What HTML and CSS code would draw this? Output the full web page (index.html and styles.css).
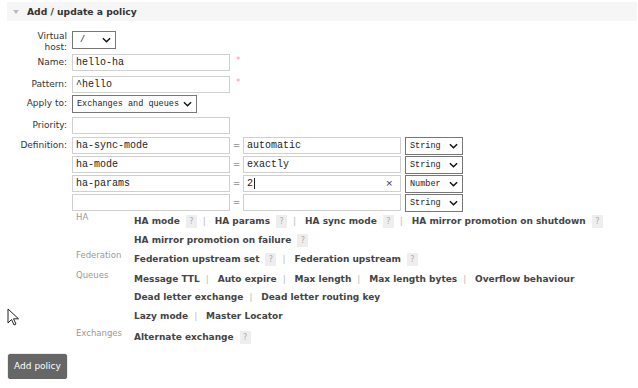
FILE: index.html
```
<!DOCTYPE html>
<html lang="en">
<head>
    <meta charset="UTF-8">
    <title>Add / update a policy</title>
    <link rel="stylesheet" href="styles.css">
</head>
<body>
    <div class="page">
        <div class="section-h"><span class="tri"></span>Add / update a policy</div>

        <div class="form">
            <div class="row vhost-row">
                <div class="label two">Virtual<br>host:</div>
                <div class="select vhost"><span>/</span><svg class="chev" viewBox="0 0 10 6"><path d="M1 1l4 4 4-4"/></svg></div>
            </div>
            <div class="row name-row">
                <div class="label">Name:</div>
                <div class="input">hello-ha</div>
                <span class="req">*</span>
            </div>
            <div class="row pattern-row">
                <div class="label">Pattern:</div>
                <div class="input">^hello</div>
                <span class="req">*</span>
            </div>
            <div class="row">
                <div class="label">Apply to:</div>
                <div class="select apply"><span>Exchanges and queues</span><svg class="chev" viewBox="0 0 10 6"><path d="M1 1l4 4 4-4"/></svg></div>
            </div>
            <div class="row prio-row">
                <div class="label">Priority:</div>
                <div class="input"></div>
            </div>

            <div class="row def">
                <div class="label">Definition:</div>
                <div class="input">ha-sync-mode</div>
                <span class="eq">=</span>
                <div class="input">automatic</div>
                <div class="select type"><span>String</span><svg class="chev" viewBox="0 0 10 6"><path d="M1 1l4 4 4-4"/></svg></div>
            </div>
            <div class="row def">
                <div class="label"></div>
                <div class="input">ha-mode</div>
                <span class="eq">=</span>
                <div class="input">exactly</div>
                <div class="select type"><span>String</span><svg class="chev" viewBox="0 0 10 6"><path d="M1 1l4 4 4-4"/></svg></div>
            </div>
            <div class="row def">
                <div class="label"></div>
                <div class="input">ha-params</div>
                <span class="eq">=</span>
                <div class="input active">2<span class="caret"></span><span class="clear">×</span></div>
                <div class="select type"><span>Number</span><svg class="chev" viewBox="0 0 10 6"><path d="M1 1l4 4 4-4"/></svg></div>
            </div>
            <div class="row def">
                <div class="label"></div>
                <div class="input"></div>
                <span class="eq">=</span>
                <div class="input"></div>
                <div class="select type"><span>String</span><svg class="chev" viewBox="0 0 10 6"><path d="M1 1l4 4 4-4"/></svg></div>
            </div>

            <div class="help">
                <div class="group">
                    <div class="cat">HA</div>
                    <div class="links">
                        <div class="line">
                            <b>HA mode</b><i class="q">?</i><span class="sep">|</span>
                            <b>HA params</b><i class="q">?</i><span class="sep">|</span>
                            <b>HA sync mode</b><i class="q">?</i><span class="sep">|</span>
                            <b>HA mirror promotion on shutdown</b><i class="q">?</i>
                        </div>
                        <div class="line">
                            <b>HA mirror promotion on failure</b><i class="q">?</i>
                        </div>
                    </div>
                </div>
                <div class="group">
                    <div class="cat">Federation</div>
                    <div class="links">
                        <div class="line">
                            <b>Federation upstream set</b><i class="q">?</i><span class="sep">|</span>
                            <b>Federation upstream</b><i class="q">?</i>
                        </div>
                    </div>
                </div>
                <div class="group queues">
                    <div class="cat">Queues</div>
                    <div class="links">
                        <div class="line">
                            <b>Message TTL</b><span class="sep">|</span>
                            <b>Auto expire</b><span class="sep">|</span>
                            <b>Max length</b><span class="sep">|</span>
                            <b>Max length bytes</b><span class="sep">|</span>
                            <b>Overflow behaviour</b>
                        </div>
                        <div class="line">
                            <b>Dead letter exchange</b><span class="sep">|</span>
                            <b>Dead letter routing key</b>
                        </div>
                        <div class="line">
                            <b>Lazy mode</b><span class="sep">|</span>
                            <b>Master Locator</b>
                        </div>
                    </div>
                </div>
                <div class="group">
                    <div class="cat">Exchanges</div>
                    <div class="links">
                        <div class="line">
                            <b>Alternate exchange</b><i class="q">?</i>
                        </div>
                    </div>
                </div>
            </div>
        </div>

        <button class="btn">Add policy</button>
    </div>

    <!-- mouse pointer caught in the screenshot -->
    <svg class="pointer" viewBox="0 0 12 18"><path d="M1 1v14l3.5-3.5 2.5 5.5 2-1-2.5-5.2h5z"/></svg>
</body>
</html>
```

FILE: styles.css
```
* {
    margin: 0;
    padding: 0;
    box-sizing: border-box;
}

body {
    font-family: "DejaVu Sans", Verdana, sans-serif;
    font-size: 9px;
    color: #444;
    background: #fff;
}

.page {
    padding: 2px 1px 0 7px;
}

.section-h {
    height: 19px;
    background: #f6f6f6;
    display: flex;
    align-items: center;
    padding-left: 6px;
    font-size: 9.2px;
    font-weight: bold;
    color: #333;
}

.tri {
    width: 0;
    height: 0;
    border-left: 3px solid transparent;
    border-right: 3px solid transparent;
    border-top: 4px solid #bbb;
    margin-right: 8px;
}

.form {
    margin-top: 10px;
}

.row {
    display: flex;
    align-items: flex-start;
    margin-bottom: 4px;
}

.row.vhost-row {
    margin-bottom: 2px;
}

.row.name-row {
    margin-bottom: 5px;
}

.row.pattern-row {
    margin-bottom: 2px;
}

.row.prio-row {
    margin-bottom: 3px;
}

.row.def {
    margin-bottom: 1px;
}

.label {
    width: 60px;
    flex-shrink: 0;
    text-align: right;
    line-height: 17px;
    margin-right: 5px;
    color: #333;
}

.label.two {
    line-height: 10.5px;
}

.input {
    width: 158px;
    height: 17px;
    border: 1px solid #d0d0d0;
    padding: 0 3px;
    font-family: "Liberation Mono", monospace;
    font-size: 10px;
    line-height: 15px;
    color: #222;
    display: flex;
    align-items: center;
}

.input.active {
    position: relative;
}

.caret {
    width: 1px;
    height: 11px;
    background: #222;
    margin-left: 1px;
}

.clear {
    position: absolute;
    right: 7px;
    top: 0;
    font-family: "DejaVu Sans", sans-serif;
    font-size: 9px;
    color: #333;
}

.req {
    color: #f7a0a0;
    font-size: 9px;
    line-height: 9px;
    margin-left: 6px;
    margin-top: 2px;
}

.eq {
    width: 13px;
    text-align: center;
    line-height: 17px;
    color: #555;
}

.select {
    height: 18px;
    border: 1px solid #777;
    background: #fff;
    display: flex;
    align-items: center;
    justify-content: space-between;
    padding: 0 4px;
    font-family: "Liberation Mono", monospace;
    font-size: 8.5px;
    color: #222;
}

.select.vhost {
    width: 44px;
    padding-left: 7px;
}

.select.apply {
    width: 125px;
}

.select.type {
    width: 58px;
    margin-left: 4px;
}

.chev {
    width: 9px;
    height: 6px;
    fill: none;
    stroke: #111;
    stroke-width: 1.6;
}

.help {
    margin: -1px 0 0 69px;
}

.group {
    display: flex;
    margin-bottom: 1px;
}

.group.queues {
    margin-bottom: 3px;
}

.cat {
    width: 58px;
    flex-shrink: 0;
    color: #999;
    font-size: 8.5px;
    line-height: 11px;
}

.line {
    line-height: 18.5px;
    white-space: nowrap;
}

.line b {
    color: #444;
}

.q {
    display: inline-block;
    font-style: normal;
    background: #eee;
    color: #aaa;
    width: 11px;
    height: 13px;
    line-height: 13px;
    text-align: center;
    font-size: 8px;
    margin-left: 6px;
    vertical-align: middle;
}

.sep {
    color: #bbb;
    margin: 0 6px;
}

.btn {
    display: block;
    margin: 7px 0 0 1px;
    width: 59px;
    height: 25px;
    background: #666;
    color: #fff;
    border: none;
    border-radius: 3px;
    font-family: "DejaVu Sans", Verdana, sans-serif;
    font-size: 9px;
    box-shadow: 0 0 1px #333;
}

.pointer {
    position: absolute;
    left: 7px;
    top: 308px;
    width: 12px;
    height: 18px;
    fill: #fff;
    stroke: #222;
    stroke-width: 1;
}
```
